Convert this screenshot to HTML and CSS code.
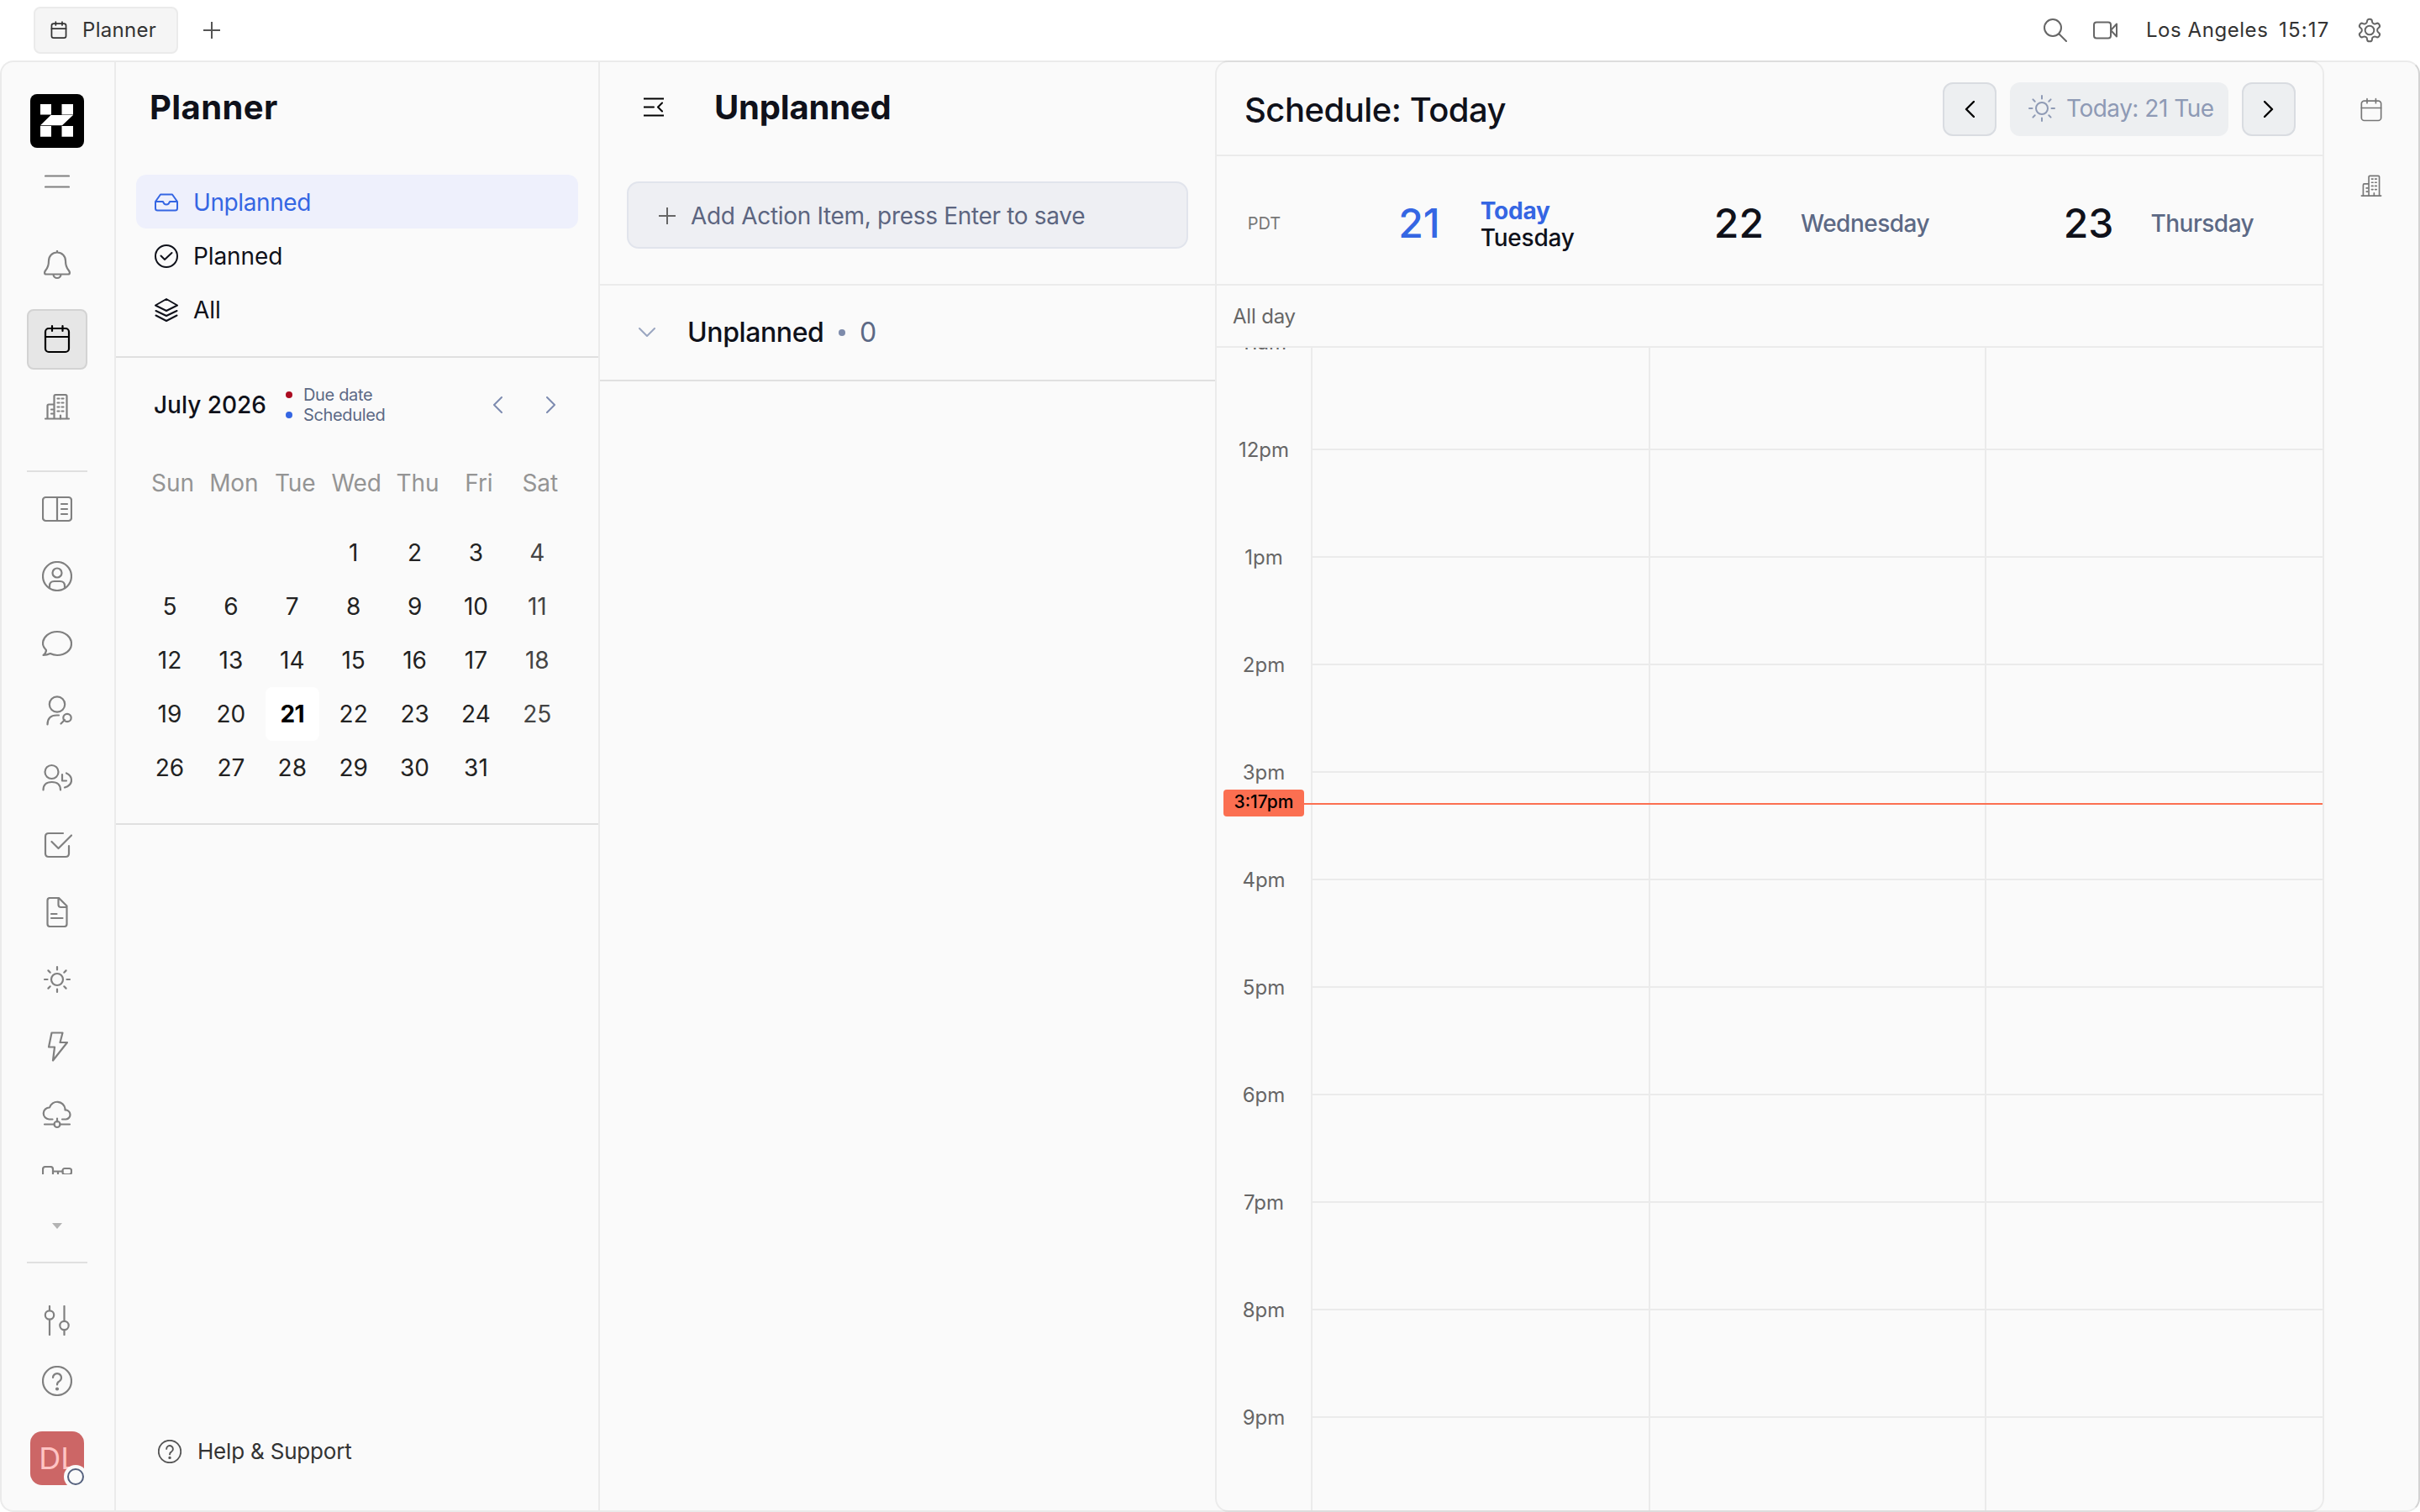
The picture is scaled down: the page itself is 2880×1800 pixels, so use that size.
FILE: index.html
```html
<!DOCTYPE html>
<html lang="en">
<head>
  <meta charset="UTF-8">
  <title>Planner</title>
  <meta name="viewport" content="width=device-width, initial-scale=1.0">
  <link rel="stylesheet" href="styles.css">
</head>
<body>
  <svg class="sprite">
    <symbol id="i-calendar" viewBox="0 0 36 36">
      <rect x="4" y="5" width="28" height="28" rx="4"/>
      <path d="M4 15h28M12 2v6M24.500 2v6"/>
    </symbol>
    <symbol id="i-building" viewBox="0 0 36 36">
      <path d="M4 32.500h28M14.500 32.500V5.500q0-1.500 1.500-1.500h12q1.500 0 1.500 1.500v27M6.500 32.500V17q0-1.500 1.500-1.500h6.500"/>
      <path d="M18.500 8.500h2M23.500 8.500h2M18.500 13.500h2M23.500 13.500h2M18.500 18.500h2M23.500 18.500h2M18.500 23.500h2M23.500 23.500h2M11 21.500h2M11 26.500h2M22 28.500v4"/>
    </symbol>
    <symbol id="i-sun" viewBox="0 0 36 36">
      <circle cx="18" cy="18" r="7"/>
      <path d="M18 3v3.500M18 29.500V33M3 18h3.500M29.500 18H33M7.400 7.400l2.300 2.300M26.300 26.300l2.300 2.300M7.400 28.600l2.300-2.300M26.300 9.700l2.300-2.300"/>
    </symbol>
    <symbol id="i-help" viewBox="0 0 36 36">
      <circle cx="18" cy="18" r="17"/>
      <path d="M13 14a5 5 0 1 1 7.500 4.400q-2.500 1.200-2.500 4"/>
      <circle cx="18" cy="27.500" r="1" class="fill"/>
    </symbol>
    <symbol id="i-plus" viewBox="0 0 20 20">
      <path d="M10 0v20M0 10h20"/>
    </symbol>
    <symbol id="i-left" viewBox="0 0 12 20">
      <path d="M11 1L2 10l9 9"/>
    </symbol>
    <symbol id="i-right" viewBox="0 0 12 20">
      <path d="M1 1l9 9-9 9"/>
    </symbol>
  </svg>

  <header class="topbar">
    <div class="tab"><svg class="icon tab-icon"><use href="#i-calendar"/></svg><span>Planner</span></div>
    <svg class="icon add-tab"><use href="#i-plus"/></svg>
    <div class="topbar-right">
      <svg class="icon search" viewBox="0 0 28 28"><circle cx="11" cy="11" r="10"/><path d="M18.500 18.500L27 27"/></svg>
      <svg class="icon video" viewBox="0 0 30 22"><rect x="1" y="1.500" width="20" height="19" rx="3"/><path d="M21 11l7-7.500v15z"/></svg>
      <span class="city">Los Angeles</span>
      <span class="clock">15:17</span>
      <svg class="icon gear" viewBox="0 0 24 24"><path d="M12.220 2h-.44a2 2 0 0 0-2 2v.18a2 2 0 0 1-1 1.730l-.43.25a2 2 0 0 1-2 0l-.15-.08a2 2 0 0 0-2.730.73l-.22.380a2 2 0 0 0 .73 2.730l.15.100a2 2 0 0 1 1 1.720v.510a2 2 0 0 1-1 1.740l-.15.090a2 2 0 0 0-.73 2.730l.22.380a2 2 0 0 0 2.730.73l.15-.08a2 2 0 0 1 2 0l.43.25a2 2 0 0 1 1 1.730V20a2 2 0 0 0 2 2h.44a2 2 0 0 0 2-2v-.18a2 2 0 0 1 1-1.730l.43-.25a2 2 0 0 1 2 0l.15.080a2 2 0 0 0 2.730-.73l.22-.390a2 2 0 0 0-.73-2.730l-.15-.08a2 2 0 0 1-1-1.740v-.5a2 2 0 0 1 1-1.740l.15-.09a2 2 0 0 0 .73-2.730l-.22-.380a2 2 0 0 0-2.730-.73l-.15.080a2 2 0 0 1-2 0l-.43-.25a2 2 0 0 1-1-1.730V4a2 2 0 0 0-2-2z"/><circle cx="12" cy="12" r="4"/></svg>
    </div>
  </header>

  <div class="shell">
    <nav class="sidebar">
      <svg class="logo" viewBox="0 0 64 64">
        <rect width="64" height="64" rx="8"/>
        <path fill="#fff" d="M12 12h13v12.500H12zM37.500 12H51v12.500H37.500zM24.500 25H51L38 37.200H12zM12 38h13v12.700H12zM37.500 38H51v12.700H37.500z"/>
      </svg>
      <svg class="icon burger" viewBox="0 0 30 16"><path d="M1 1.500h28M1 14.500h28"/></svg>

      <a class="nav-item bell"><svg class="icon" viewBox="0 0 36 36"><path d="M18 0v2M18 2.500c-6 0-10 4.500-10 10 0 5-1 8-3.500 11-2 2.500-2 5 .5 5h26c2.500 0 2.500-2.500.5-5C29 20.500 28 17.500 28 12.500c0-5.500-4-10-10-10zM13.500 28.500a4.500 4.500 0 0 0 9 0"/></svg></a>
      <a class="nav-item active"><svg class="icon"><use href="#i-calendar"/></svg></a>
      <a class="nav-item"><svg class="icon"><use href="#i-building"/></svg></a>
      <hr class="nav-line">

      <div class="nav-scroll">
        <a class="nav-item"><svg class="icon" viewBox="0 0 36 36"><rect x="1" y="4" width="34" height="28" rx="3.500"/><path d="M18 4v28M23 12h7M23 18h7M23 24h7"/></svg></a>
        <a class="nav-item"><svg class="icon" viewBox="0 0 36 36"><circle cx="18" cy="18" r="17"/><circle cx="18" cy="14" r="5.500"/><path d="M9 31.500v-2q0-5.500 5.500-5.500h7q5.500 0 5.500 5.500v2"/></svg></a>
        <a class="nav-item"><svg class="icon" viewBox="0 0 36 36"><path d="M18 4c9.400 0 17 6.300 17 14.300S27.400 32 18 32c-3 0-5.800-.7-8.200-1.900Q6 32 1.500 32q3.500-3 3.500-6C2.500 23.500 1 21.500 1 18.300 1 10.300 8.600 4 18 4z"/></svg></a>
        <a class="nav-item"><svg class="icon" viewBox="0 0 36 36"><circle cx="18" cy="10.500" r="9.200"/><path d="M6.500 34.500q0-11 11-11h2.500M27 29l-4.500 4.500"/><circle cx="30" cy="26.500" r="4.700"/></svg></a>
        <a class="nav-item"><svg class="icon" viewBox="0 0 36 36"><circle cx="11.500" cy="11" r="8"/><path d="M1.500 32.500q0-9.500 10.200-9.500T22 32.500M24 14v7.500h5M29 12.500q6 2.500 6 8.500t-8 8.500"/></svg></a>
        <a class="nav-item"><svg class="icon" viewBox="0 0 36 36"><path d="M25 4H8Q4 4 4 8v20q0 4 4 4h20q4 0 4-4v-9M11.500 14l8 8L35 6.500"/></svg></a>
        <a class="nav-item"><svg class="icon" viewBox="0 0 36 36"><path d="M20 1H9.500Q6.500 1 6.500 4v28q0 3 3 3h17q3 0 3-3V10.500zM19.500 1v8q0 3 3 3h7M11 20h6.500M11 25h13.500"/></svg></a>
        <a class="nav-item"><svg class="icon"><use href="#i-sun"/></svg></a>
        <a class="nav-item"><svg class="icon" viewBox="0 0 36 36"><path d="M11.500 1.500h13l-3 11.500h8.500L13 34.500 15 18.500H8z"/></svg></a>
        <a class="nav-item"><svg class="icon" viewBox="0 0 36 36"><path d="M12.500 24.500H8.500A7 7 0 0 1 9 10.500 9.500 9.500 0 0 1 27.500 12v1.500a5.500 5.500 0 0 1 1 11H24M18 23.500v4M3 30.500h11.500M21.500 30.500H33"/><circle cx="18" cy="30.500" r="3.500"/></svg></a>
        <a class="nav-item"><svg class="icon" viewBox="0 0 36 36"><rect x="1" y="1" width="12" height="14" rx="3"/><rect x="24.500" y="3" width="10.500" height="7" rx="2.500"/><path d="M13 6.500h11.500M19 6.500v20"/></svg></a>
      </div>

      <svg class="caret" viewBox="0 0 12 7"><path d="M0 0h12L6 7z"/></svg>
      <hr class="nav-line">
      <a class="nav-item small"><svg class="icon" viewBox="0 0 36 36"><path d="M9 1v4.500M9 17.500V35M26.500 1v17M26.500 30v5"/><circle cx="9" cy="11.500" r="5.200"/><circle cx="26.500" cy="24" r="5.200"/></svg></a>
      <a class="nav-item small"><svg class="icon"><use href="#i-help"/></svg></a>
      <div class="avatar">DL<span class="status"></span></div>
    </nav>

    <section class="planner">
      <h1>Planner</h1>
      <ul class="views">
        <li class="active"><svg class="icon" viewBox="0 0 28 28"><path d="M1 13L7 4.500h14L27 13v8q0 2.500-2.500 2.500h-21Q1 23.500 1 21zM1 13h9q1 3.500 4 3.500t4-3.500h9"/></svg>Unplanned</li>
        <li><svg class="icon" viewBox="0 0 28 28"><circle cx="14" cy="14" r="13"/><path d="M7.500 13.500l4.500 4.500 8.500-8"/></svg>Planned</li>
        <li><svg class="icon" viewBox="0 0 28 28"><path d="M14 1l13 7.500-13 6.500L1 8.500zM1.500 15L14 21l12.500-6M1.500 20.500L14 27l12.500-6.500"/></svg>All</li>
      </ul>

      <div class="month">
        <div class="month-head">
          <span class="month-name">July 2026</span>
          <div class="legend">
            <span><i class="dot due"></i>Due date</span>
            <span><i class="dot scheduled"></i>Scheduled</span>
          </div>
          <svg class="icon arrow"><use href="#i-left"/></svg>
          <svg class="icon arrow"><use href="#i-right"/></svg>
        </div>
        <div class="week-names">
          <span>Sun</span><span>Mon</span><span>Tue</span><span>Wed</span><span>Thu</span><span>Fri</span><span>Sat</span>
        </div>
        <div class="dates">
          <span></span><span></span><span></span><span>1</span><span>2</span><span>3</span><span class="sat">4</span>
          <span>5</span><span>6</span><span>7</span><span>8</span><span>9</span><span>10</span><span class="sat">11</span>
          <span>12</span><span>13</span><span>14</span><span>15</span><span>16</span><span>17</span><span class="sat">18</span>
          <span>19</span><span>20</span><span class="today">21</span><span>22</span><span>23</span><span>24</span><span class="sat">25</span>
          <span>26</span><span>27</span><span>28</span><span>29</span><span>30</span><span>31</span><span></span>
        </div>
      </div>

      <div class="support"><svg class="icon"><use href="#i-help"/></svg>Help &amp; Support</div>
    </section>

    <section class="items">
      <div class="items-top">
        <div class="items-title">
          <svg class="icon collapse" viewBox="0 0 24 24"><path d="M0 1.500h24M0 11.500h12M0 21.500h24M22 6.500l-5 5 5 5"/></svg>
          <h1>Unplanned</h1>
        </div>
        <div class="add-item"><svg class="icon"><use href="#i-plus"/></svg>Add Action Item, press Enter to save</div>
      </div>
      <div class="group">
        <svg class="icon chevron" viewBox="0 0 20 12"><path d="M1 1l9 9 9-9"/></svg>
        <span class="group-name">Unplanned</span>
        <i class="group-dot"></i>
        <span class="group-count">0</span>
      </div>
    </section>

    <section class="schedule">
      <div class="schedule-head">
        <h2>Schedule: Today</h2>
        <button class="btn"><svg class="icon"><use href="#i-left"/></svg></button>
        <button class="btn-today"><svg class="icon"><use href="#i-sun"/></svg>Today: 21 Tue</button>
        <button class="btn"><svg class="icon"><use href="#i-right"/></svg></button>
      </div>
      <div class="days">
        <span class="zone">PDT</span>
        <div class="day current"><b>21</b><div><strong>Today</strong><span>Tuesday</span></div></div>
        <div class="day"><b>22</b><span>Wednesday</span></div>
        <div class="day"><b>23</b><span>Thursday</span></div>
      </div>
      <div class="all-day">All day</div>
      <div class="hours">
        <div class="hour first"><span>11am</span><i></i><i></i><i></i></div>
        <div class="hour"><span>12pm</span><i></i><i></i><i></i></div>
        <div class="hour"><span>1pm</span><i></i><i></i><i></i></div>
        <div class="hour"><span>2pm</span><i></i><i></i><i></i></div>
        <div class="hour"><span>3pm</span><i></i><i></i><i></i></div>
        <div class="hour"><span>4pm</span><i></i><i></i><i></i></div>
        <div class="hour"><span>5pm</span><i></i><i></i><i></i></div>
        <div class="hour"><span>6pm</span><i></i><i></i><i></i></div>
        <div class="hour"><span>7pm</span><i></i><i></i><i></i></div>
        <div class="hour"><span>8pm</span><i></i><i></i><i></i></div>
        <div class="hour"><span>9pm</span><i></i><i></i><i></i></div>
        <div class="now-line"></div>
        <div class="now-time">3:17pm</div>
      </div>
    </section>

    <aside class="rail">
      <svg class="icon"><use href="#i-calendar"/></svg>
      <svg class="icon"><use href="#i-building"/></svg>
    </aside>
  </div>
</body>
</html>
```

FILE: styles.css
```css
* {
  box-sizing: border-box;
}
body {
  margin: 0;
  width: 2880px;
  height: 1800px;
  overflow: hidden;
  display: flex;
  flex-direction: column;
  background: #fff;
  color: #0f111a;
  font-family: Inter, "Liberation Sans", sans-serif;
  font-size: 28px;
}
h1, h2, ul {
  margin: 0;
  padding: 0;
}
h1 {
  font-size: 40px;
  line-height: 48px;
  font-weight: 700;
  letter-spacing: -0.2px;
}
i {
  font-style: normal;
}
.sprite {
  position: absolute;
  width: 0;
  height: 0;
}
.icon {
  display: block;
  flex: none;
  width: 36px;
  height: 36px;
  fill: none;
  stroke: currentColor;
  stroke-width: 2;
  stroke-linecap: round;
  stroke-linejoin: round;
}
.fill {
  fill: currentColor;
}

/* top bar */
.topbar {
  height: 72px;
  display: flex;
  align-items: center;
  padding: 0 46px 0 40px;
  font-size: 24px;
  color: #333;
}
.tab {
  width: 172px;
  height: 56px;
  display: flex;
  align-items: center;
  gap: 17px;
  padding-left: 17px;
  background: #f5f5f5;
  border: 2px solid #ebebeb;
  border-radius: 8px;
  letter-spacing: 0.3px;
}
.tab span {
  margin-top: -1px;
}
.tab-icon {
  width: 22px;
  height: 22px;
  stroke-width: 2.800;
}
.add-tab {
  width: 20px;
  height: 20px;
  margin-left: 30px;
  color: #555;
}
.topbar-right {
  margin-left: auto;
  display: flex;
  align-items: center;
}
.topbar-right .icon {
  color: #666;
}
.topbar-right .search {
  width: 28px;
  height: 28px;
  margin-right: 31px;
}
.topbar-right .video {
  width: 30px;
  height: 22px;
  margin-right: 33px;
}
.city {
  width: 158px;
  margin-top: -1px;
  letter-spacing: 0.55px;
  white-space: nowrap;
}
.clock {
  width: 92px;
  margin-top: -1px;
  letter-spacing: 1.2px;
}
.topbar-right .gear {
  width: 32px;
  height: 32px;
  margin-right: -2px;
  stroke-width: 1.5;
}

/* app frame */
.shell {
  height: 1728px;
  display: flex;
  background: #fafafa;
  border: 2px solid #ebebeb;
  border-right-color: #d3d3d3;
  border-radius: 16px;
}
.sidebar {
  width: 136px;
  display: flex;
  flex-direction: column;
  align-items: center;
  padding: 38px 2px 0 0;
  border-right: 2px solid #ebebeb;
  color: #808080;
}
.logo {
  width: 64px;
  height: 64px;
}
.icon.burger {
  width: 30px;
  height: 16px;
  margin: 32px 0 56px;
}
.sidebar .icon {
  stroke-width: 2.200;
}
.nav-item {
  flex: none;
  width: 72px;
  height: 72px;
  margin-bottom: 8px;
  display: flex;
  align-items: center;
  justify-content: center;
}
.nav-item.bell {
  margin-bottom: 16px;
}
.nav-item.active {
  background: #e6e6e6;
  border: 2px solid #d3d3d3;
  border-radius: 8px;
  color: #000;
}
.nav-item.small {
  margin: 0;
}
.nav-line {
  flex: none;
  width: 72px;
  height: 2px;
  margin: 32px 0 8px;
  border: none;
  background: #e0e0e0;
}
.nav-scroll {
  height: 828px;
  overflow: hidden;
}
.caret {
  width: 12px;
  height: 7px;
  margin-top: 58px;
  fill: #b3b3b3;
}
.caret + .nav-line {
  margin: 39px 0 32px;
}
.avatar {
  position: relative;
  width: 64px;
  height: 64px;
  margin-top: 24px;
  padding-left: 3px;
  border-radius: 14px;
  background: #cc6666;
  color: #ffc4c4;
  font-size: 36px;
  line-height: 64px;
  text-align: center;
}
.status {
  position: absolute;
  right: 0;
  bottom: 0;
  width: 20px;
  height: 20px;
  border: 2px solid #55617e;
  border-radius: 50%;
  background: #fafafa;
  box-shadow: 0 0 0 4px #fafafa;
}

/* planner column */
.planner {
  width: 576px;
  display: flex;
  flex-direction: column;
  border-right: 2px solid #ebebeb;
}
.planner h1 {
  margin: 30px 0 56px 40px;
  letter-spacing: 0.4px;
}
.views {
  height: 218px;
  padding: 0 24px;
  list-style: none;
  border-bottom: 2px solid #e0e0e0;
}
.views li {
  height: 64px;
  display: flex;
  align-items: center;
  gap: 18px;
  padding: 1px 0 0 22px;
  border-radius: 12px;
  letter-spacing: -0.1px;
}
.views .active {
  background: #eef0fc;
  color: #3566e3;
  letter-spacing: -0.4px;
}
.views .icon {
  width: 28px;
  height: 28px;
}
.month {
  height: 556px;
  border-bottom: 2px solid #e0e0e0;
}
.month-head {
  display: flex;
  align-items: center;
  height: 48px;
  margin: 32px 50px 0 45px;
}
.month-name {
  width: 157px;
  font-weight: 500;
}
.legend {
  flex: 1;
  display: flex;
  flex-direction: column;
  font-size: 20px;
  line-height: 24px;
  letter-spacing: -0.35px;
  color: #5c6985;
}
.legend span {
  display: flex;
  align-items: center;
}
.dot {
  width: 8px;
  height: 8px;
  margin-right: 13px;
  border-radius: 50%;
}
.due {
  background: #ab0c21;
}
.scheduled {
  background: #3566e3;
}
.arrow {
  width: 12px;
  height: 20px;
  margin-left: 52px;
  color: #7d8bb0;
}
.week-names, .dates {
  display: grid;
  grid-template-columns: repeat(7, 72.9px);
  text-align: center;
}
.week-names {
  margin: 53px 0 0 31px;
  line-height: 32px;
  letter-spacing: -0.1px;
  color: #949494;
}
.dates {
  margin: 35px 0 0 27px;
  color: #222;
}
.dates span {
  width: 64px;
  height: 64px;
  margin-left: 5px;
  line-height: 65px;
}
.dates .sat {
  color: #444;
}
.dates .today {
  background: #fff;
  border-radius: 8px;
  color: #000;
  font-weight: 700;
  letter-spacing: -0.6px;
}
.support {
  display: flex;
  align-items: center;
  gap: 19px;
  margin: auto 0 54px 50px;
  font-size: 26px;
  line-height: 32px;
  letter-spacing: -0.2px;
  color: #333;
}
.support .icon {
  width: 28px;
  height: 28px;
  color: #555;
  stroke-width: 2.400;
}

/* action items */
.items {
  width: 732px;
}
.items-top {
  height: 266px;
  padding: 30px 32px 0;
  border-bottom: 2px solid #ebebeb;
}
.items-title {
  display: flex;
  align-items: center;
}
.collapse {
  width: 24px;
  height: 24px;
  margin: 0 60px 0 20px;
  color: #000;
}
.add-item {
  height: 80px;
  margin-top: 64px;
  display: flex;
  align-items: center;
  gap: 18px;
  padding: 1px 0 0 36px;
  background: #eeeff3;
  border: 2px solid #e1e4ec;
  border-radius: 14px;
  color: #5c6580;
  letter-spacing: -0.32px;
}
.add-item .icon {
  width: 20px;
  height: 20px;
  color: #666;
}
.group {
  height: 114px;
  display: flex;
  align-items: center;
  padding: 0 0 1px 46px;
  border-bottom: 2px solid #e0e0e0;
  font-size: 32px;
}
.chevron {
  width: 20px;
  height: 12px;
  color: #9aa6c0;
}
.group-name {
  width: 180px;
  margin-left: 38px;
  font-weight: 500;
  letter-spacing: -0.4px;
}
.group-dot {
  width: 8px;
  height: 8px;
  border-radius: 50%;
  background: #7d8bab;
}
.group-count {
  margin-left: 17px;
  color: #5c6985;
}

/* schedule */
.schedule {
  width: 1320px;
  margin: -2px 0;
  display: flex;
  flex-direction: column;
  border: 2px solid rgba(0, 0, 0, 0.06);
  border-radius: 16px;
}
.schedule-head {
  height: 112px;
  display: flex;
  align-items: center;
  padding: 2px 32px 0 33px;
  border-bottom: 2px solid #ebebeb;
}
.schedule-head h2 {
  flex: 1;
  font-size: 40px;
  font-weight: 500;
  letter-spacing: -0.5px;
}
button {
  height: 64px;
  display: flex;
  align-items: center;
  padding: 0;
  border: none;
  border-radius: 12px;
  background: #edeff1;
  font: inherit;
}
.btn {
  width: 64px;
  justify-content: center;
  border: 2px solid #d9dce1;
  color: #000;
}
.btn .icon {
  width: 12px;
  height: 20px;
  stroke-width: 2.400;
}
.btn-today {
  width: 260px;
  margin: 0 16px;
  padding: 0 0 2px 20px;
  gap: 11px;
  color: #8e9ab5;
  letter-spacing: -0.5px;
}
.days {
  height: 154px;
  display: grid;
  grid-template-columns: 112px 402px 400px 402px;
  align-items: center;
  padding-top: 7px;
  border-bottom: 2px solid #ebebeb;
}
.zone {
  padding-left: 1px;
  text-align: center;
  font-size: 20px;
  color: #777;
}
.day {
  display: flex;
  align-items: center;
  justify-content: center;
  gap: 44px;
  padding-left: 12px;
  font-weight: 500;
  color: #5c6985;
  letter-spacing: -0.5px;
}
.day b {
  font-size: 48px;
  font-weight: 500;
  letter-spacing: 0;
  color: #0f111a;
}
.current {
  gap: 48px;
  padding-left: 16px;
}
.day div {
  display: flex;
  flex-direction: column;
  line-height: 32px;
  letter-spacing: -0.2px;
  padding-top: 2px;
  color: #0f111a;
}
.day strong, .day.current b {
  color: #3566e3;
}
.all-day {
  height: 74px;
  padding: 1px 0 0 19px;
  line-height: 72px;
  border-bottom: 2px solid #ebebeb;
  font-size: 24px;
  letter-spacing: -0.2px;
  color: #666;
}
.hours {
  position: relative;
  flex: 1;
  min-height: 0;
  overflow: hidden;
}
.hour {
  height: 128px;
  display: grid;
  grid-template-columns: 112px 402px 400px 402px;
}
.hour.first {
  margin-top: -8px;
}
.hour span {
  height: 36px;
  margin-top: -16px;
  line-height: 36px;
  text-align: center;
  font-size: 24px;
  color: #666;
}
.hour i {
  border: solid #ebebeb;
  border-width: 2px 0 0 2px;
}
.now-line {
  position: absolute;
  top: 542px;
  left: 104px;
  right: 0;
  height: 2px;
  background: #fb6f51;
}
.now-time {
  position: absolute;
  top: 526px;
  left: 8px;
  width: 96px;
  height: 32px;
  border-radius: 4px;
  background: #fb6f51;
  color: #000;
  font-size: 21px;
  font-weight: 500;
  line-height: 30px;
  text-align: center;
}

/* right rail */
.rail {
  flex: 1;
  display: flex;
  flex-direction: column;
  align-items: center;
  gap: 60px;
  padding: 42px 0 0 0;
  color: #777;
}
.rail .icon {
  width: 30px;
  height: 30px;
}
```
